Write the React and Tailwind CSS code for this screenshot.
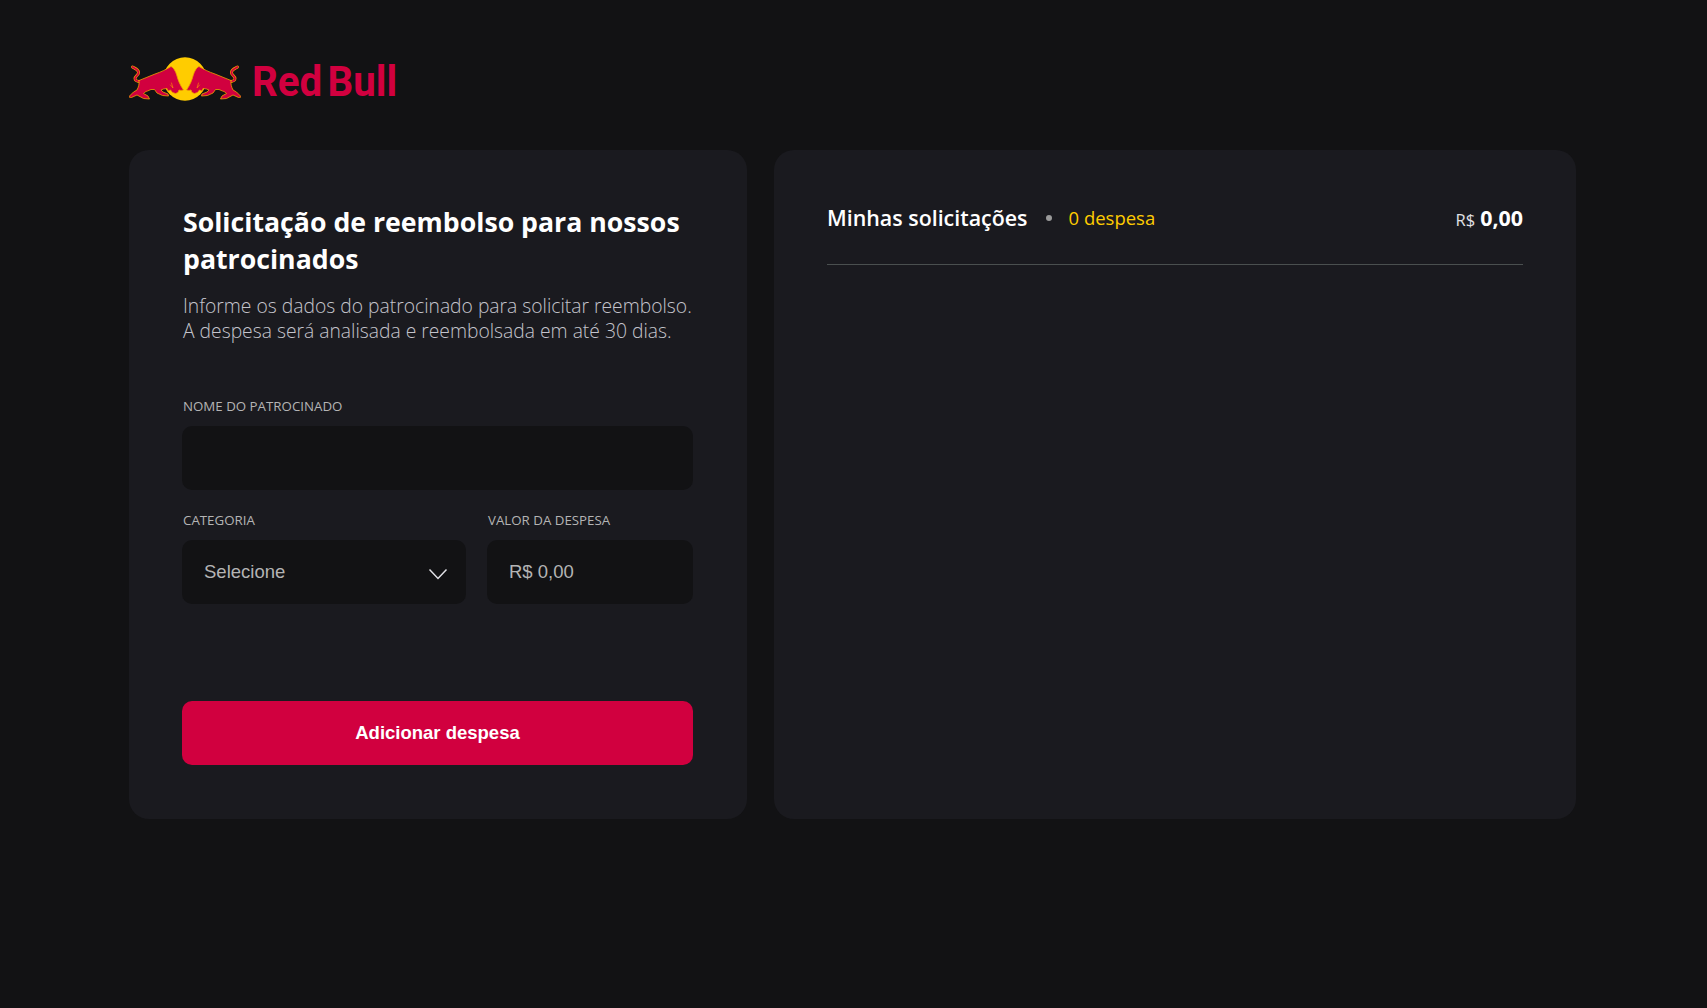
import React from "react";

const Bull = () => (
  <g strokeLinejoin="round" strokeLinecap="round">
    {/* tail */}
    <path
      d="M6.5 13 C9 14.5 12.5 15.5 12.6 18.5 C12.7 21 9 22 9 24.5 C9 27 12 27.5 15 27.5"
      fill="none"
      stroke="#f5a000"
      strokeWidth="2.9"
    />
    <path
      d="M6.5 13 C9 14.5 12.5 15.5 12.6 18.5 C12.7 21 9 22 9 24.5 C9 27 12 27.5 15 27.5"
      fill="none"
      stroke="#d1003f"
      strokeWidth="1.7"
    />
    {/* body, head and legs */}
    <path
      d="M13 26.5 C18 24.5 24 22 29 20 C35 18 40 15.5 45 12.5 C47.5 13.5 49.5 17 51 22 C52 26 54 31 57.5 36 C55.5 36.5 54.5 36.5 53 36 L52 38.5 L49.5 39.5 L46.5 38.5 L44.5 36 L42 37 L41 34.5 L37.5 35 L35 36 L37 38 L42 40 L42.5 42 L36.5 41.5 L31 39 L28.5 35.5 L25 35.5 L21.5 37 C19.5 37.5 18.5 38.5 17.5 39.5 L22 42 L23.5 45 L17.5 44.5 L11 41 L5.5 43.5 L2.5 43 L7.5 38 L11 36 C12.5 33 13.5 30 13 26.5 Z"
      fill="#d1003f"
      stroke="#f0a000"
      strokeWidth="0.8"
    />
    {/* shading lines */}
    <path d="M44.5 31 L47 34 L45.5 29" fill="none" stroke="#ff9a00" strokeWidth="0.6" />
  </g>
);

const RedBullLogo = () => (
  <div className="flex items-start">
    <svg width="112" height="50" viewBox="3 0 112 50" className="block">
      <circle cx="59" cy="25" r="21.7" fill="#ffcc00" />
      <Bull />
      <g transform="translate(118 0) scale(-1 1)">
        <Bull />
      </g>
    </svg>
    <span className="mt-[3px] ml-[11px] w-[143px] origin-left scale-x-[0.96] whitespace-nowrap font-['Roboto',sans-serif] text-[42px] leading-[50px] font-bold [word-spacing:-5px] text-[#d1003f]">
      Red Bull
    </span>
  </div>
);

const Label = ({ children }) => (
  <label className="mb-[11px] block pl-px font-['Open_Sans',sans-serif] text-[13.3px] leading-[18px] font-normal text-[#b4b4b4]">
    {children}
  </label>
);

export default function App() {
  return (
    <div className="min-h-screen bg-[#121214] px-[129px] pt-[54px] font-['Open_Sans',sans-serif]">
      <div className="h-[96px]">
        <RedBullLogo />
      </div>

      <main className="grid grid-cols-[618px_802px] gap-[27px]">
        <section className="h-[669px] rounded-[20px] bg-[#1a1a1f] pt-[53px] pr-[54px] pl-[53px]">
          <h1 className="pl-px text-[26.7px] leading-[37px] font-bold text-white">
            Solicitação de reembolso para nossos patrocinados
          </h1>
          <p className="mt-[16px] pl-px text-[19.3px] leading-[25px] font-light whitespace-nowrap text-[#c4c4cc]">
            Informe os dados do patrocinado para solicitar reembolso.
            <br />A despesa será analisada e reembolsada em até 30 dias.
          </p>

          <div className="mt-[54px]">
            <Label>NOME DO PATROCINADO</Label>
            <div className="h-[64px] rounded-[10px] bg-[#121214]" />
          </div>

          <div className="mt-[21px] grid grid-cols-[284px_206px] gap-[21px]">
            <div>
              <Label>CATEGORIA</Label>
              <div className="flex h-[64px] items-center justify-between rounded-[10px] bg-[#121214] pr-[18px] pl-[22px] font-['Liberation_Sans',sans-serif] text-[18.5px] text-[#b4b4b4]">
                <span>Selecione</span>
                <svg width="20" height="12" viewBox="0 0 20 12" fill="none" className="mt-[3px] block">
                  <path d="M1.5 1.5 L10 10.5 L18.5 1.5" stroke="#e1e1e6" strokeWidth="1.5" />
                </svg>
              </div>
            </div>
            <div>
              <Label>VALOR DA DESPESA</Label>
              <div className="flex h-[64px] items-center rounded-[10px] bg-[#121214] px-[22px] font-['Liberation_Sans',sans-serif] text-[18.5px] text-[#b4b4b4]">
                R$ 0,00
              </div>
            </div>
          </div>

          <button className="mt-[97px] h-[64px] w-full rounded-[10px] bg-[#d1003f] font-['Liberation_Sans',sans-serif] text-[18.5px] font-bold text-white">
            Adicionar despesa
          </button>
        </section>

        <section className="h-[669px] rounded-[20px] bg-[#1a1a1f] px-[53px] pt-[53px]">
          <div className="flex h-[62px] items-start justify-between border-b border-[#4a4f4f]">
            <div className="flex items-center">
              <h2 className="text-[21.4px] leading-[30px] font-semibold text-white">Minhas solicitações</h2>
              <span className="mr-[17px] ml-[18px] h-[6px] w-[6px] rounded-full bg-[#9a9a9a]" />
              <span className="text-[18.5px] leading-[30px] text-[#ffcc00]">0 despesa</span>
            </div>
            <div className="flex items-baseline leading-[30px] text-white">
              <span className="mr-[5px] text-[16.5px] text-[#e1e1e6]">R$</span>
              <strong className="text-[21.4px] font-bold">0,00</strong>
            </div>
          </div>
        </section>
      </main>
    </div>
  );
}
